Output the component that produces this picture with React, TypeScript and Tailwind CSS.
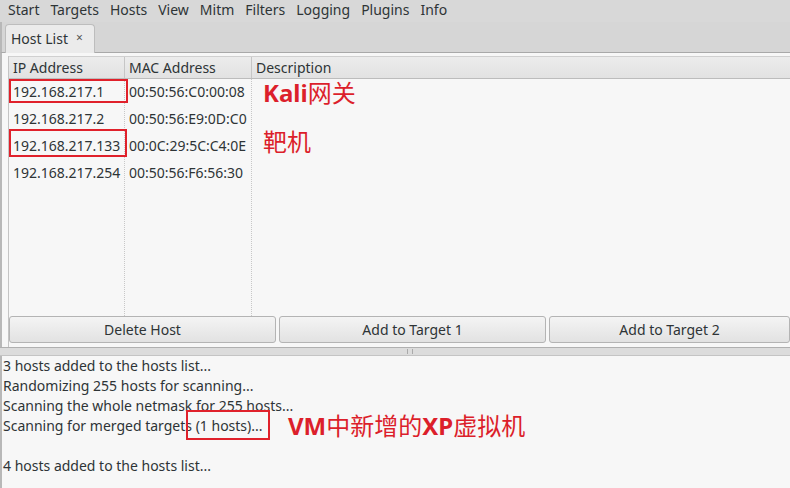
import React from "react";

const font = { fontFamily: '"Noto Sans", "Noto Sans CJK SC", sans-serif' };

const rows = [
  ["192.168.217.1", "00:50:56:C0:00:08"],
  ["192.168.217.2", "00:50:56:E9:0D:C0"],
  ["192.168.217.133", "00:0C:29:5C:C4:0E"],
  ["192.168.217.254", "00:50:56:F6:56:30"],
];

const menus = ["Start", "Targets", "Hosts", "View", "Mitm", "Filters", "Logging", "Plugins", "Info"];

export default function App() {
  return (
    <div className="relative w-[790px] h-[488px] overflow-hidden bg-[#f7f7f7] text-[14px] text-[#2e3436] flex flex-col" style={font}>
      {/* menu bar */}
      <div className="h-[22px] bg-[#d8d8d8] flex items-center gap-[11px] pl-[8px] pb-[2px] leading-none shrink-0">
        {menus.map((m) => (
          <span key={m}>{m}</span>
        ))}
      </div>
      {/* tab bar */}
      <div className="h-[31px] bg-[#d6d6d6] border-b border-[#a9a9a9] flex items-end pl-[3px] shrink-0 border-l-2 border-l-[#b8b8b8]">
        <div className="w-[90px] h-[29px] bg-[#ebebeb] border border-[#bdbdbd] border-b-0 rounded-t-[4px] flex items-center pl-[5px] pb-[2px] gap-[8px] -mb-px">
          <span>Host List</span>
          <span className="text-[12px] text-[#555]">×</span>
        </div>
      </div>
      {/* table panel */}
      <div className="h-[294px] bg-[#f7f7f7] border-l-2 border-l-[#b8b8b8] flex flex-col pl-[6px] pt-[3px] shrink-0">
        <div className="flex-1 border-l border-[#c4c4c4] flex flex-col">
          <div className="h-[23px] flex bg-gradient-to-b from-[#ececec] to-[#e2e2e2] border-b border-[#bcbcbc] border-t border-t-[#d0d0d0] shrink-0">
            <div className="w-[116px] pl-[4px] pb-[1px] flex items-center border-r border-[#c6c6c6]">IP Address</div>
            <div className="w-[127px] pl-[4px] pb-[1px] flex items-center border-r border-[#c6c6c6]">MAC Address</div>
            <div className="flex-1 pl-[4px] pb-[1px] flex items-center">Description</div>
          </div>
          <div className="flex-1 flex relative">
            <div className="w-[116px] border-r border-dotted border-[#c8c8c8]">
              {rows.map((r) => (
                <div key={r[0]} className="h-[27px] pl-[4px] pb-[2px] flex items-center">{r[0]}</div>
              ))}
            </div>
            <div className="w-[127px] border-r border-dotted border-[#c8c8c8]">
              {rows.map((r) => (
                <div key={r[1]} className="h-[27px] pl-[4px] pb-[2px] flex items-center">{r[1]}</div>
              ))}
            </div>
            <div className="flex-1" />
            {/* annotations */}
            <div className="absolute left-[0px] top-[0px] w-[119px] h-[24px] border-2 border-[#e0212b]" />
            <div className="absolute left-[0px] top-[50px] w-[118px] h-[28px] border-2 border-[#e0212b]" />
            <div className="absolute left-[254px] top-[0px] text-[24px] leading-[28px] text-[#dc1f2b] whitespace-nowrap">
              <span className="font-bold">Kali</span>
              <span>网关</span>
            </div>
            <div className="absolute left-[254px] top-[49px] text-[24px] leading-[28px] text-[#dc1f2b] whitespace-nowrap">靶机</div>
          </div>
          <div className="h-[27px] flex gap-[3px] mb-[4px] shrink-0">
            {["Delete Host", "Add to Target 1", "Add to Target 2"].map((b, i) => (
              <div
                key={b}
                className={`${i === 2 ? "flex-1" : "w-[267px]"} h-full flex items-center justify-center pb-[1px] rounded-[3px] border border-[#b4b4b4] bg-gradient-to-b from-[#f4f4f4] to-[#e2e2e2]`}
              >
                {b}
              </div>
            ))}
          </div>
        </div>
      </div>
      {/* splitter */}
      <div className="h-[9px] bg-[#dcdcdc] border-t border-[#b0b0b0] border-b border-b-[#c4c4c4] flex justify-center items-center shrink-0">
        <div className="w-[6px] h-[5px] border-x border-[#aaa] ml-[30px]" />
      </div>
      {/* log area */}
      <div className="flex-1 relative border-l-2 border-l-[#b8b8b8] pl-[1px] leading-[20px]">
        <div>3 hosts added to the hosts list...</div>
        <div>Randomizing 255 hosts for scanning...</div>
        <div>Scanning the whole netmask for 255 hosts...</div>
        <div>Scanning for merged targets (1 hosts)...</div>
        <div>&nbsp;</div>
        <div>4 hosts added to the hosts list...</div>
        <div className="absolute left-[184px] top-[54px] w-[84px] h-[30px] border-2 border-[#e0212b]" />
        <div className="absolute left-[286px] top-[56px] text-[24px] leading-[28px] text-[#dc1f2b] whitespace-nowrap">
          <span className="font-bold">VM</span>
          <span>中新增的</span>
          <span className="font-bold">XP</span>
          <span>虚拟机</span>
        </div>
      </div>
    </div>
  );
}
